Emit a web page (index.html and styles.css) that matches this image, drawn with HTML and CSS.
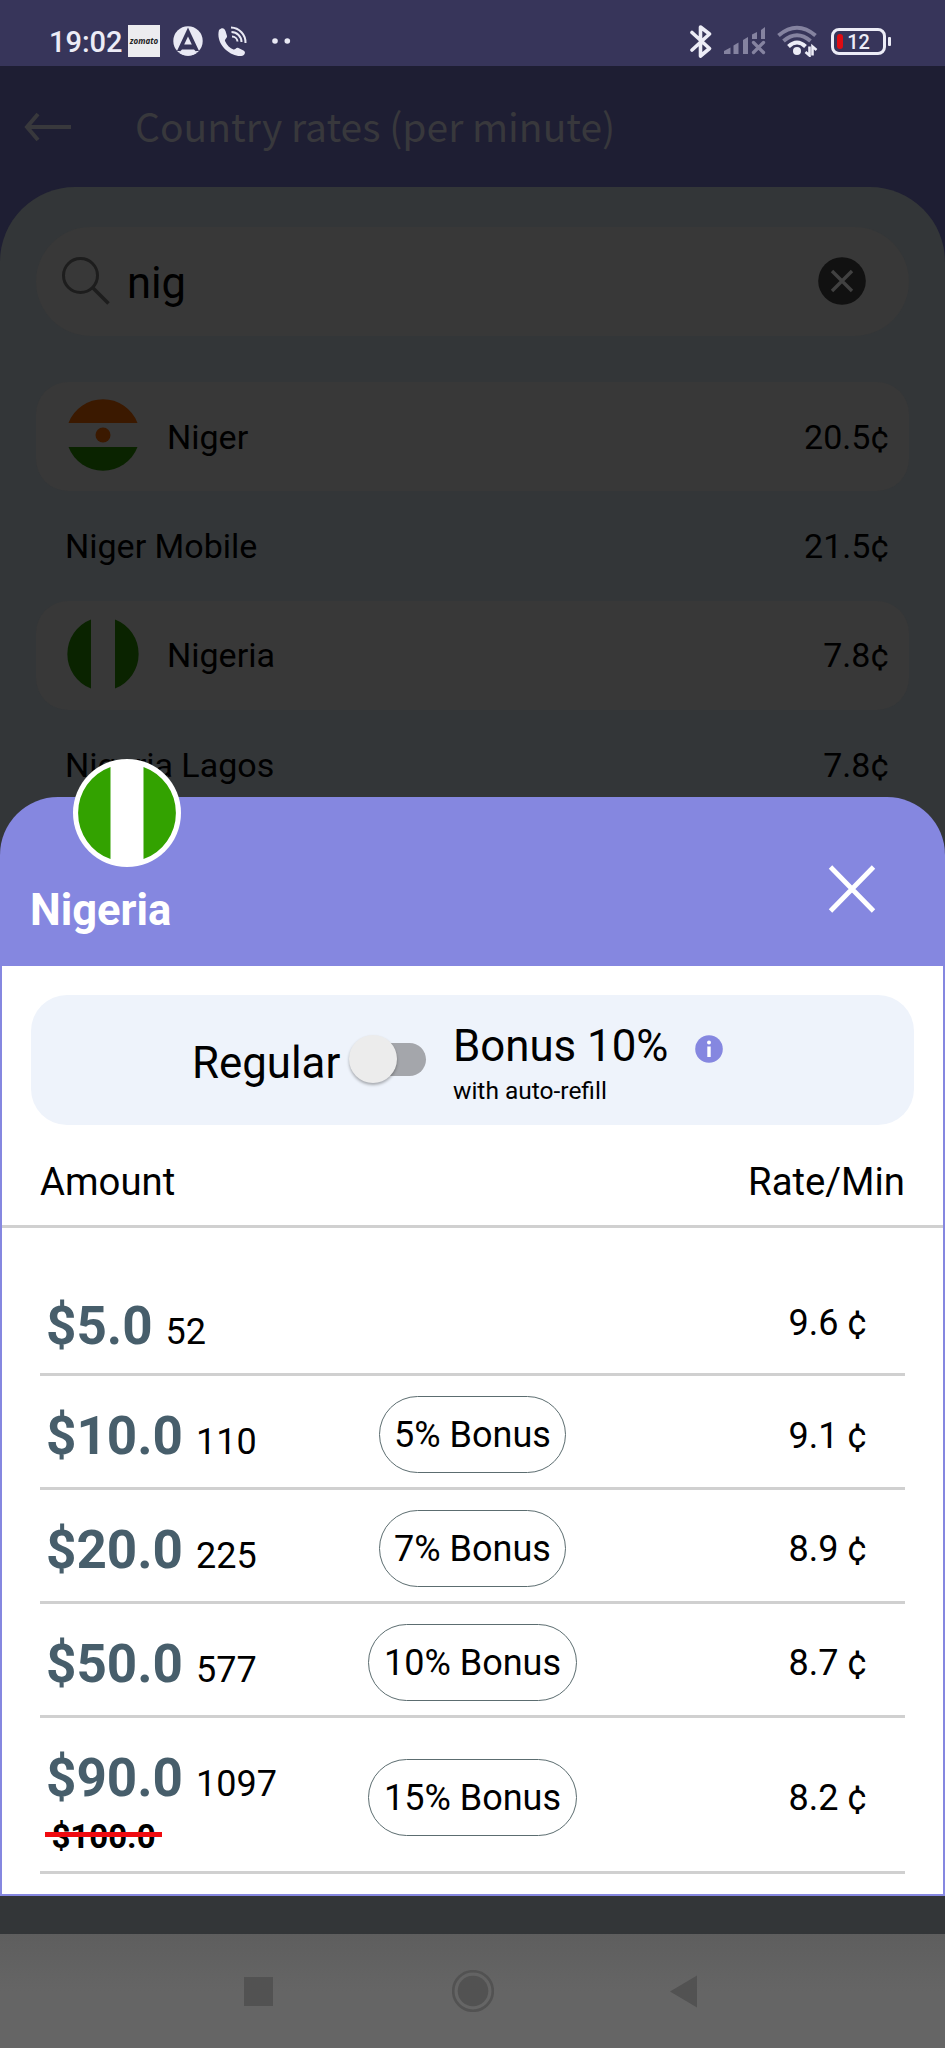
FILE: index.html
```html
<!DOCTYPE html>
<html lang="en">
<head>
<meta charset="utf-8">
<title>Country rates</title>
<link rel="stylesheet" href="styles.css">
</head>
<body>
<div class="phone">
  <header class="status">
    <span class="clock">19:02</span>
    <span class="zomato">zomato</span>
    <svg class="ic-a" width="30" height="30" viewBox="0 0 30 30"><circle cx="15" cy="15" r="14.7" fill="#e9e9f4"/><path d="M15 1.500 26 25H4Z" fill="#37355a"/><path d="M15 10.500 18.800 18.500H11.200Z" fill="#e9e9f4"/><path d="M8.500 23.500H21.500L24 27H6Z" fill="#37355a"/><path d="M9 23.500H21L24 26.500Q20 29.700 15 29.700T6 26.500Z" fill="#e9e9f4"/></svg>
    <svg class="ic-call" width="30" height="31" viewBox="0 0 30 31"><path d="M2 4C5 1 7.500 2 8.500 5L10 10C10.500 12 7.500 13 8 15C10 19.500 13 22 16.500 23.500C18.500 24 19 21 21.500 22L26.500 24.500C29 26 28 28.500 25.500 29.800C15 32-2 19 2 4Z" fill="#e9e9f4"/><g fill="none" stroke="#e9e9f4" stroke-width="2"><path d="M14 1.500A15 15 0 0 1 28.500 17"/><path d="M14.500 6A10 10 0 0 1 24.500 16"/><path d="M15 10.500A5.500 5.500 0 0 1 20.500 15.500"/></g></svg>
    <svg class="ic-dots" width="20" height="8" viewBox="0 0 20 8"><circle cx="4" cy="4" r="2.800" fill="#e9e9f4"/><circle cx="16.300" cy="4" r="2.800" fill="#e9e9f4"/></svg>
    <svg class="ic-bt" width="22" height="35" viewBox="0 0 22 35"><path d="M2 8.500 19.500 24.500 10.500 32V3L19.500 10 2 26" fill="none" stroke="#ececf6" stroke-width="3.600" stroke-linejoin="round" stroke-linecap="round"/></svg>
    <svg class="ic-signal" width="42" height="28" viewBox="0 0 42 28"><g fill="#8583a0"><path d="M0 27V24L6.500 20.500V27Z"/><path d="M9.500 27V18.500L14.500 15.500V27Z"/><path d="M19 27V13L24 10V27Z"/><path d="M28 12V7.500L33 5V12Z"/><path d="M37 12V3L41 0V12Z"/></g><path d="m29.500 15.500 10 10m0-10-10 10" stroke="#8583a0" stroke-width="3.300" stroke-linecap="round"/></svg>
    <svg class="ic-wifi" width="41" height="32" viewBox="0 0 41 32"><g fill="none" stroke-width="4"><path d="M1.500 10.500Q20-5 38.500 10.500" stroke="#8583a0"/><path d="M6.500 16Q20 4.500 33.500 16" stroke="#8583a0"/><path d="M11.500 21.500Q20 13.500 28.500 21.500" stroke="#ececf6"/></g><circle cx="20" cy="26" r="4" fill="#ececf6"/><path d="M32.500 21.500V30.500L28.500 27M35.500 30.500V21.500L39.500 25" fill="none" stroke="#ececf6" stroke-width="2.600"/></svg>
    <span class="battery"><span class="level"></span>12</span><span class="nub"></span>
  </header>
  <div class="appbar">
    <svg width="48" height="30" viewBox="0 0 48 30"><path d="M14 2 3 15 14 28M3 15H47" fill="none" stroke="#38383c" stroke-width="4"/></svg>
    <h1>Country rates (per minute)</h1>
  </div>
  <main class="page">
    <div class="search">
      <svg width="48" height="48" viewBox="0 0 48 48"><circle cx="18.500" cy="18.500" r="17" fill="none" stroke="#1d1d1d" stroke-width="3"/><path d="M30.500 30.500 46.500 46.500" stroke="#1d1d1d" stroke-width="3.400"/></svg>
      <span class="query">nig</span>
      <svg width="48" height="48" viewBox="0 0 48 48"><circle cx="24" cy="24" r="23.800" fill="#111"/><path d="m14 14 20 20m0-20L14 34" stroke="#414141" stroke-width="3.400"/></svg>
    </div>
    <ul class="rates">
      <li class="rate card"><svg class="flag" viewBox="0 0 74 74"><path d="M2.500 25A37 37 0 0 1 71.500 25Z" fill="#3b1900"/><circle cx="37" cy="37" r="7.500" fill="#3b1900"/><path d="M2.500 49A37 37 0 0 0 71.500 49Z" fill="#0a2300"/></svg><span>Niger</span><b>20.5¢</b></li>
      <li class="rate"><span>Niger Mobile</span><b>21.5¢</b></li>
      <li class="rate card"><svg class="flag" viewBox="0 0 74 74"><path d="M25 2.500A37 37 0 0 0 25 71.500ZM49 2.500A37 37 0 0 1 49 71.500Z" fill="#0a2300"/></svg><span>Nigeria</span><b>7.8¢</b></li>
      <li class="rate"><span>Nigeria Lagos</span><b>7.8¢</b></li>
    </ul>
  </main>
  <nav class="navbar">
    <svg width="29" height="29"><path d="M0 0H29V29H0Z" fill="#525252"/></svg>
    <svg width="42" height="42"><circle cx="21" cy="21" r="19.800" fill="none" stroke="#525252" stroke-width="2.600"/><circle cx="21" cy="21" r="15.300" fill="#525252"/></svg>
    <svg width="29" height="33"><path d="M1 16.500 28 0.500V32.500Z" fill="#525252"/></svg>
  </nav>

  <section class="sheet">
    <svg class="badge" viewBox="0 0 108 108"><circle cx="54" cy="54" r="54" fill="#fff"/><path d="M37.500 7.900A49 49 0 0 0 37.500 100.100ZM70.500 7.900A49 49 0 0 1 70.500 100.100Z" fill="#33a200"/></svg>
    <div class="sheet-head">
      <h2>Nigeria</h2>
      <svg class="close" width="48" height="48" viewBox="0 0 48 48"><path d="M2.500 2 45.500 46M45.500 2 2.500 46" stroke="#fff" stroke-width="4.800"/></svg>
    </div>
    <div class="sheet-body">
      <div class="plan">
        <span class="regular">Regular</span>
        <span class="switch"><i></i></span>
        <div class="bonus"><span>Bonus 10%</span><small>with auto-refill</small></div>
        <svg class="info" width="28" height="28" viewBox="0 0 28 28"><circle cx="14" cy="14" r="13.800" fill="#8587e0"/><circle cx="14" cy="7.600" r="2" fill="#fff"/><path d="M14 11.500V22" stroke="#fff" stroke-width="3.400"/></svg>
      </div>
      <div class="cols"><span>Amount</span><span>Rate/Min</span></div>
      <div class="table">
        <div class="row first"><div class="amount"><b>$5.0</b><span>52</span></div><div></div><span class="cents">9.6 ¢</span></div>
        <div class="row"><div class="amount"><b>$10.0</b><span>110</span></div><div class="pill">5% Bonus</div><span class="cents">9.1 ¢</span></div>
        <div class="row"><div class="amount"><b>$20.0</b><span>225</span></div><div class="pill">7% Bonus</div><span class="cents">8.9 ¢</span></div>
        <div class="row"><div class="amount"><b>$50.0</b><span>577</span></div><div class="pill">10% Bonus</div><span class="cents">8.7 ¢</span></div>
        <div class="row tall"><div class="amount"><b>$90.0</b><span>1097</span><div class="old">$100.0</div></div><div class="pill">15% Bonus</div><span class="cents">8.2 ¢</span></div>
      </div>
    </div>
  </section>
</div>
</body>
</html>
```
FILE: styles.css
```css
* { box-sizing: border-box; }
body { margin: 0; font-family: Roboto, "Liberation Sans", sans-serif; color: #000; }
h1, h2, ul { margin: 0; padding: 0; font-weight: 400; list-style: none; }
svg { display: block; flex: none; }
.phone { position: relative; width: 945px; height: 2048px; overflow: hidden; display: flex; flex-direction: column; background: #1e1e33; }

/* status bar */
.status { height: 66px; flex: none; padding: 16px 0 0 49px; display: flex; align-items: center; background: #37355a; color: #ececf6; }
.clock { width: 79px; padding-top: 2px; font-size: 29px; font-weight: 500; line-height: 50px; }
.zomato { width: 32px; height: 32px; background: #ececef; color: #222; font: italic 700 8px/32px "Open Sans", sans-serif; text-align: center; }
.ic-a { margin-left: 13px; }
.ic-call { margin-left: 14px; }
.ic-dots { margin-left: 24px; }
.ic-bt { margin-left: 399px; }
.ic-signal { margin-left: 12px; }
.ic-wifi { margin-left: 11px; }
.battery { position: relative; width: 55px; height: 27px; margin-left: 13px; border: 3px solid #ececf6; border-radius: 8px; font-size: 20px; font-weight: 500; line-height: 22px; text-align: center; }
.level { position: absolute; left: 3px; top: 3px; width: 6px; height: 15px; border-radius: 3px; background: #e00b12; }
.nub { width: 3px; height: 9px; margin-left: 2px; border-radius: 1px; background: #ececf6; }

/* page behind the sheet */
.appbar { height: 121px; flex: none; display: flex; align-items: center; padding-left: 24px; gap: 63px; color: #38383c; }
.appbar h1 { padding-bottom: 3px; font: 400 39px/60px "Noto Sans CJK SC", "Noto Sans", sans-serif; white-space: nowrap; }
.page { flex: 1; padding: 40px 36px 0; border-radius: 75px 75px 0 0; background: #333638; }
.search { height: 109px; display: flex; align-items: center; padding: 0 43px 1px 26px; border-radius: 55px; background: #383838; }
.query { flex: 1; padding: 5px 0 0 17px; font-size: 43.500px; }
.rates { padding-top: 46px; }
.rate { height: 109.300px; display: flex; align-items: center; padding: 0 20px 0 29px; border-radius: 32px; font-size: 34px; }
.card { background: #383838; }
.flag { width: 74px; height: 74px; margin: -3px 27px 0 1px; }
.rate b { margin-left: auto; font-weight: 400; }
.navbar { height: 114px; flex: none; display: flex; align-items: center; padding-left: 244px; background: linear-gradient(#5e5e5e, #656565 50%); }
.navbar svg:nth-child(2) { margin: 0 175px 0 179px; }

/* bottom sheet */
.sheet { position: absolute; left: 0; right: 0; top: 797px; height: 1099px; display: flex; flex-direction: column; border-radius: 58px 58px 0 0; background: #8587e0; }
.badge { position: absolute; left: 73px; top: -38px; width: 108px; height: 108px; }
.sheet-head { height: 169px; flex: none; display: flex; justify-content: space-between; padding: 0 69px 0 30px; color: #fff; }
.sheet-head h2 { padding-top: 84px; font-size: 43.500px; font-weight: 700; line-height: 60px; }
.close { margin-top: 68px; }
.sheet-body { flex: 1; margin: 0 2px 2px; background: #fff; }
.plan { height: 130px; margin: 29px 29px 0; display: flex; padding-left: 161px; border-radius: 36px; background: #eef3fb; }
.regular { width: 150px; padding-top: 2px; font-size: 43.800px; line-height: 132px; }
.switch { position: relative; width: 73px; height: 33px; margin-top: 48px; margin-left: 11px; border-radius: 17px; background: #a4a6ab; }
.switch i { position: absolute; left: -4px; top: -8px; width: 48px; height: 48px; border-radius: 50%; background: #ececec; box-shadow: 0 2px 3px rgba(0, 0, 0, .3); }
.bonus { width: 242px; margin-left: 27px; padding-top: 26px; font-size: 43.800px; line-height: 50px; }
.bonus small { display: block; font-size: 24.500px; line-height: 40px; }
.info { margin-top: 40px; }
.cols { height: 102.500px; display: flex; justify-content: space-between; align-items: center; padding: 13px 38px 0; border-bottom: 3px solid #d0d0d0; font-size: 38.300px; }
.table { padding: 35px 38px 0; }
.row { height: 113.800px; display: grid; grid-template-columns: 329px 207px 1fr; align-items: center; padding: 6px 38px 0 0; border-bottom: 3px solid #d0d0d0; font-size: 36px; }
.first { padding-top: 9px; }
.tall { height: 156.500px; }
.amount { align-self: start; padding: 28px 0 0 6px; line-height: 52px; }
.amount b { margin-right: 13px; color: #475e6b; font-size: 53px; line-height: 52px; }
.pill { justify-self: center; height: 77px; padding: 0 14.500px; border: 1px solid #5c6d70; border-radius: 39px; line-height: 77px; white-space: nowrap; }
.cents { justify-self: end; padding-top: 2px; }
.old { position: relative; width: 117px; margin: 2px 0 0 -1px; text-align: center; font-size: 33px; font-weight: 700; line-height: 50px; }
.old::after { content: ""; position: absolute; left: 0; right: 0; top: 20px; height: 5px; background: #f00b10; }
```
